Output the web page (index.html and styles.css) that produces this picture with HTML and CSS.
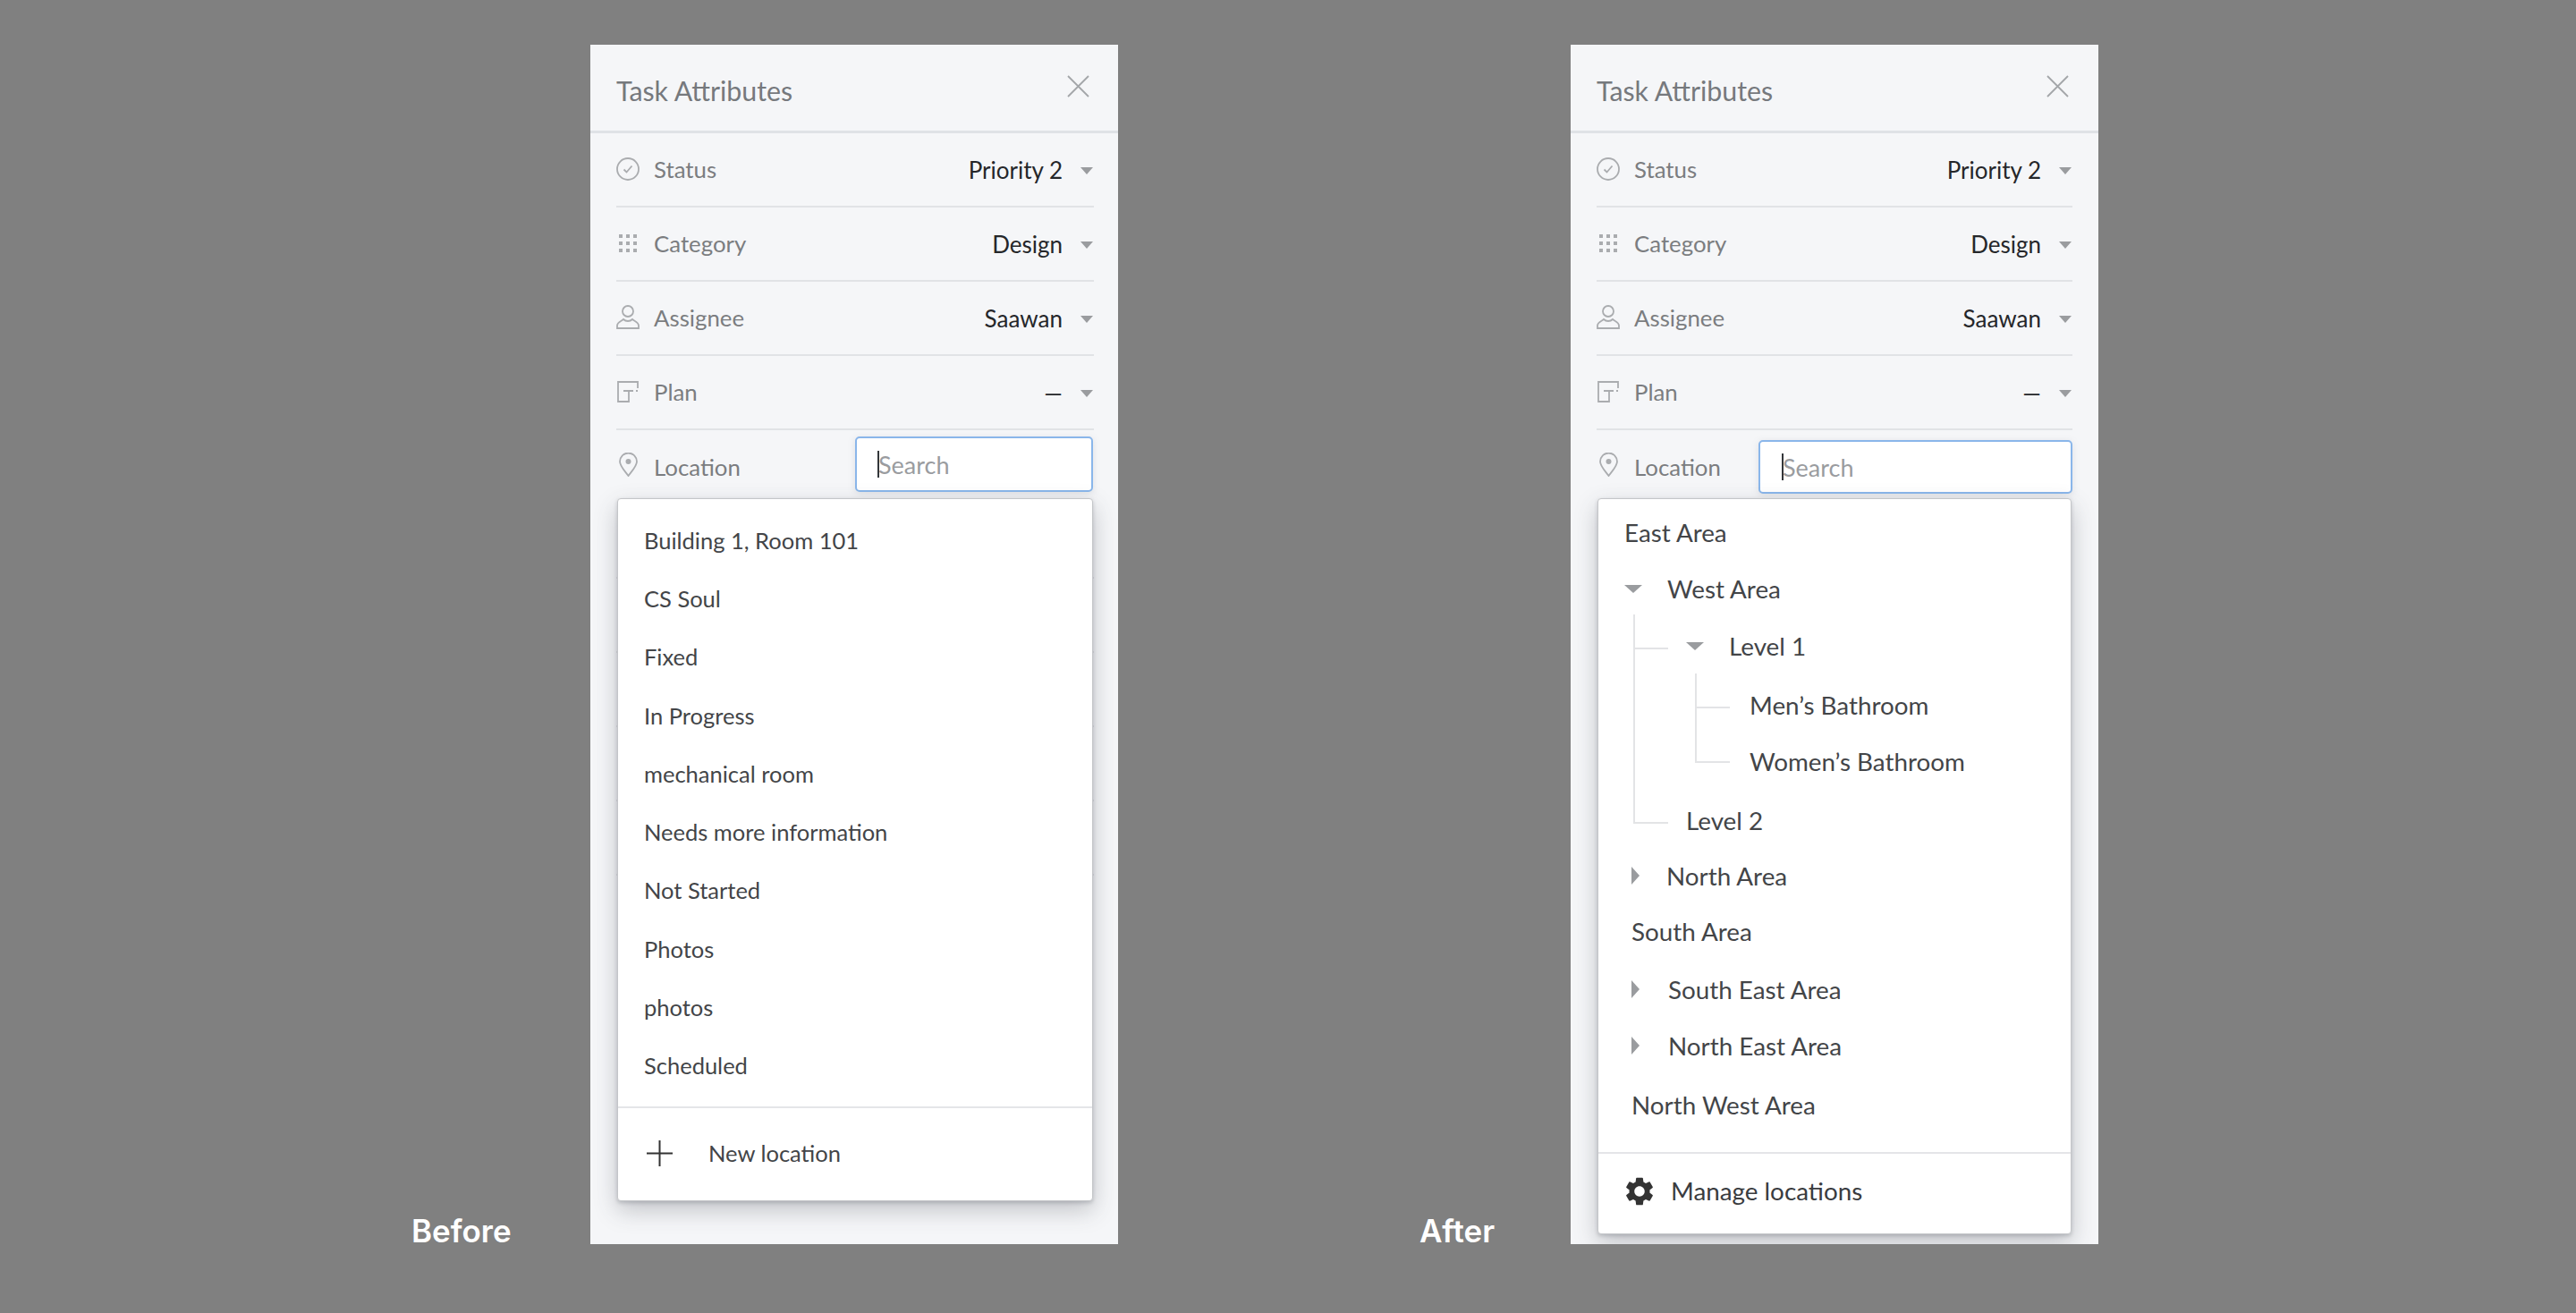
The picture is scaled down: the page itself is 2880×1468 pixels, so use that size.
FILE: index.html
```html
<!DOCTYPE html>
<html lang="en">
<head>
<meta charset="utf-8">
<title>Task Attributes: before and after</title>
<link rel="stylesheet" href="styles.css">
</head>
<body>
<svg class="defs" aria-hidden="true">
  <symbol id="i-close" viewBox="0 0 25 25"><path d="M1 1l23 23M24 1L1 24"/></symbol>
  <symbol id="i-status" viewBox="0 0 26 26"><circle cx="13" cy="13" r="12"/><path d="M8.5 13.5l3 3 6-7"/></symbol>
  <symbol id="i-category" viewBox="0 0 20 20"><path class="fill" d="M0 0h4v4H0zM8 0h4v4H8zM16 0h4v4h-4zM0 8h4v4H0zM8 8h4v4H8zM16 8h4v4h-4zM0 16h4v4H0zM8 16h4v4H8zM16 16h4v4h-4z"/></symbol>
  <symbol id="i-person" viewBox="0 0 26 27"><circle cx="13" cy="7" r="6"/><path d="M1 26v-3c0-4 5-5 7-7 1 1 3 2 5 2s4-1 5-2c2 2 7 3 7 7v3z"/></symbol>
  <symbol id="i-plan" viewBox="0 0 24 24"><path d="M23 8V1H1v22h12V11M7 11h11M21 11h2"/></symbol>
  <symbol id="i-pin" viewBox="0 0 21 27"><path d="M10.5 26C6 20 1 15 1 10a9.500 9.500 0 0 1 19 0c0 5-5 10-9.500 16z"/><circle class="fill" cx="10.500" cy="10" r="3"/></symbol>
  <symbol id="i-plus" viewBox="0 0 29 29"><path d="M14.500 0v29M0 14.500h29"/></symbol>
  <symbol id="i-gear" viewBox="2.600 2 18.800 20"><path class="fill" d="M19.140 12.940c.04-.3.06-.61.06-.94 0-.32-.02-.64-.07-.94l2.030-1.580c.18-.14.23-.41.12-.61l-1.920-3.320c-.12-.22-.37-.29-.59-.22l-2.390.96c-.5-.38-1.030-.7-1.620-.94l-.36-2.540c-.04-.24-.24-.41-.48-.41h-3.840c-.24 0-.43.17-.47.41l-.36 2.540c-.59.24-1.130.57-1.620.94l-2.390-.96c-.22-.08-.47 0-.59.22L2.740 8.870c-.12.21-.08.47.12.61l2.030 1.580c-.05.3-.09.63-.09.94s.02.64.07.94l-2.030 1.580c-.18.14-.23.41-.12.61l1.920 3.320c.12.22.37.29.59.22l2.390-.96c.5.38 1.030.7 1.620.94l.36 2.540c.05.24.24.41.48.41h3.840c.24 0 .44-.17.47-.41l.36-2.540c.59-.24 1.130-.56 1.620-.94l2.390.96c.22.08.47 0 .59-.22l1.920-3.320c.12-.22.07-.47-.12-.61l-2.010-1.580zM12 15.600c-1.980 0-3.600-1.620-3.600-3.600s1.620-3.600 3.600-3.600 3.600 1.620 3.600 3.600-1.620 3.600-3.600 3.600z"/></symbol>
</svg>

<main class="stage">
  <h2 class="tag tag-before">Before</h2>
  <section class="panel panel-before">
    <header class="panel-head">
      <h1 class="panel-title">Task Attributes</h1>
      <svg class="icon icon-close"><use href="#i-close"/></svg>
    </header>
    <div class="rows">
      <div class="row"><span class="ico-box"><svg class="icon icon-status"><use href="#i-status"/></svg></span><span class="label">Status</span><span class="value">Priority 2</span><i class="caret"></i></div>
      <div class="row"><span class="ico-box"><svg class="icon icon-category"><use href="#i-category"/></svg></span><span class="label">Category</span><span class="value">Design</span><i class="caret"></i></div>
      <div class="row"><span class="ico-box"><svg class="icon icon-person"><use href="#i-person"/></svg></span><span class="label">Assignee</span><span class="value">Saawan</span><i class="caret"></i></div>
      <div class="row"><span class="ico-box"><svg class="icon icon-plan"><use href="#i-plan"/></svg></span><span class="label">Plan</span><span class="value">—</span><i class="caret"></i></div>
      <div class="row row-location"><span class="ico-box"><svg class="icon icon-pin"><use href="#i-pin"/></svg></span><span class="label">Location</span><div class="search search-before"><span class="search-text">Search</span></div></div>
      <div class="row row-hidden"></div>
      <div class="row row-hidden"></div>
      <div class="row row-hidden"></div>
      <div class="row row-hidden"></div>
      <div class="row row-hidden"></div>
    </div>
    <div class="menu menu-before">
      <ul class="flat-list">
        <li>Building 1, Room 101</li>
        <li>CS Soul</li>
        <li>Fixed</li>
        <li>In Progress</li>
        <li>mechanical room</li>
        <li>Needs more information</li>
        <li>Not Started</li>
        <li>Photos</li>
        <li>photos</li>
        <li>Scheduled</li>
      </ul>
      <div class="menu-foot foot-new"><svg class="icon icon-plus"><use href="#i-plus"/></svg><span>New location</span></div>
    </div>
  </section>

  <h2 class="tag tag-after">After</h2>
  <section class="panel panel-after">
    <header class="panel-head">
      <h1 class="panel-title">Task Attributes</h1>
      <svg class="icon icon-close"><use href="#i-close"/></svg>
    </header>
    <div class="rows">
      <div class="row"><span class="ico-box"><svg class="icon icon-status"><use href="#i-status"/></svg></span><span class="label">Status</span><span class="value">Priority 2</span><i class="caret"></i></div>
      <div class="row"><span class="ico-box"><svg class="icon icon-category"><use href="#i-category"/></svg></span><span class="label">Category</span><span class="value">Design</span><i class="caret"></i></div>
      <div class="row"><span class="ico-box"><svg class="icon icon-person"><use href="#i-person"/></svg></span><span class="label">Assignee</span><span class="value">Saawan</span><i class="caret"></i></div>
      <div class="row"><span class="ico-box"><svg class="icon icon-plan"><use href="#i-plan"/></svg></span><span class="label">Plan</span><span class="value">—</span><i class="caret"></i></div>
      <div class="row row-location"><span class="ico-box"><svg class="icon icon-pin"><use href="#i-pin"/></svg></span><span class="label">Location</span><div class="search search-after"><span class="search-text">Search</span></div></div>
    </div>
    <div class="menu menu-after">
      <div class="tree">
        <svg class="tree-lines" aria-hidden="true"><path d="M40 129V362H78M40 167H78M109 195V294H147M109 233H147"/></svg>
        <div class="node n-root">East Area</div>
        <div class="node n-open up1"><i class="caret caret-tree"></i>West Area</div>
        <div class="node n-open-2"><i class="caret caret-tree"></i>Level 1</div>
        <div class="node n-leaf-3 down2">Men’s Bathroom</div>
        <div class="node n-leaf-3 up1">Women’s Bathroom</div>
        <div class="node n-leaf-2 down2">Level 2</div>
        <div class="node n-closed up2"><i class="caret-right"></i>North Area</div>
        <div class="node n-plain up2">South Area</div>
        <div class="node n-closed wide down1"><i class="caret-right"></i>South East Area</div>
        <div class="node n-closed wide up1"><i class="caret-right"></i>North East Area</div>
        <div class="node n-plain down2">North West Area</div>
      </div>
      <div class="menu-foot foot-manage"><svg class="icon icon-gear"><use href="#i-gear"/></svg><span>Manage locations</span></div>
    </div>
  </section>
</main>
</body>
</html>
```

FILE: styles.css
```css
* { box-sizing: border-box; }
html, body { margin: 0; padding: 0; }
body {
  width: 2880px;
  height: 1468px;
  background: #808080;
  font-family: Lato, "Open Sans", sans-serif;
  overflow: hidden;
}
.defs { display: none; }

.stage {
  display: grid;
  grid-template-columns: 201px 590px 337px 169px 590px;
  padding: 50px 0 0 459px;
}
.tag-before { grid-column: 1; grid-row: 1; padding-left: 1px; }
.panel-before { grid-column: 2; grid-row: 1; }
.tag-after { grid-column: 4; grid-row: 1; }
.panel-after { grid-column: 5; grid-row: 1; }

.tag {
  align-self: end;
  margin: 0 0 -7px;
  color: #fff;
  font-family: Inter, "Open Sans", sans-serif;
  font-size: 35px;
  font-weight: 600;
  line-height: 44px;
}

.panel {
  position: relative;
  height: 1341px;
  padding: 0 27px 0 29px;
  background: #f5f6f8;
  overflow: hidden;
}
.panel-after { padding-right: 29px; }

.panel-head {
  display: flex;
  justify-content: space-between;
  height: 99px;
  margin: 0 -27px 0 -29px;
  padding: 33px 32px 0 29px;
  border-bottom: 3px solid #dfe2e6;
}
.panel-after .panel-head { margin-right: -29px; padding-right: 33px; }
.panel-title {
  margin: 0;
  color: #76797d;
  font-size: 30.300px;
  font-weight: 400;
  line-height: 36px;
}

.icon { display: block; fill: none; stroke: #aaacaf; color: #aaacaf; stroke-width: 1.800; overflow: visible; }
symbol .fill { fill: currentColor; stroke: none; }
.icon-close { width: 25px; height: 25px; stroke: #a3a6a9; margin-top: 1px; }
.icon-status { width: 26px; height: 26px; }
.icon-category { width: 20px; height: 20px; }
.icon-person { width: 26px; height: 27px; }
.icon-plan { width: 24px; height: 24px; }
.icon-pin { width: 21px; height: 27px; }
.icon-plus { width: 29px; height: 29px; stroke: #333; color: #333; stroke-width: 2; }
.icon-gear { width: 30px; height: 32px; stroke: none; color: #333; }

.row {
  display: flex;
  align-items: center;
  height: 83px;
  border-bottom: 2px solid #e1e3e6;
}
.ico-box {
  display: flex;
  justify-content: center;
  width: 26px;
  margin-right: 16px;
  margin-top: -2px;
}
.label {
  margin-top: -2px;
  color: #7b7d80;
  font-size: 25.800px;
}
.value {
  margin-left: auto;
  color: #25272a;
  font-size: 26px;
}
.caret {
  display: block;
  width: 0;
  height: 0;
  margin: 3px 1px 0 20px;
  border-left: 7px solid transparent;
  border-right: 7px solid transparent;
  border-top: 8px solid #9a9c9f;
}

.row-location { align-items: flex-start; border-bottom: 0; padding-top: 27px; }
.row-location .label { margin-top: -1px; }

.search {
  display: flex;
  align-items: center;
  margin-left: auto;
  background: #fff;
  border: 2px solid #8ab6ea;
  border-radius: 5px;
  box-shadow: 0 2px 8px rgba(120, 130, 140, .18);
  color: #9a9c9f;
  font-size: 27px;
}
.search-before { width: 266px; height: 62px; margin-top: -20px; margin-right: 1px; padding-left: 24px; }
.search-after { width: 351px; height: 60px; margin-top: -16px; padding-left: 25px; }
.search-text {
  position: relative;
}
.search-text::before {
  content: "";
  position: absolute;
  left: -1px;
  top: 1px;
  width: 2px;
  height: 30px;
  background: #33363a;
}

.menu {
  position: absolute;
  top: 507px;
  left: 30px;
  display: flex;
  flex-direction: column;
  background: #fff;
  border: 1px solid #c4c6c9;
  border-radius: 4px;
  box-shadow: 0 10px 26px rgba(60, 65, 75, .28), 0 2px 4px rgba(60, 65, 75, .22);
  color: #434548;
}
.menu-before { width: 532px; height: 786px; }
.menu-after { width: 530px; height: 823px; font-size: 27.800px; }

.flat-list {
  margin: 0;
  padding: 13px 0 13px 29px;
  list-style: none;
  font-size: 25.500px;
  border-bottom: 2px solid #e4e5e8;
}
.flat-list li {
  display: flex;
  align-items: center;
  height: 65.300px;
}

.menu-foot { display: flex; align-items: center; flex: 1; }
.foot-new { padding: 0 0 2px 32px; font-size: 25.500px; }
.foot-new span { margin-left: 40px; }
.foot-manage { padding: 0 0 6px 31px; font-size: 27.800px; color: #3a3c3f; }
.foot-manage span { margin-left: 20px; }

.tree {
  position: relative;
  padding: 5px 0 21px;
  border-bottom: 2px solid #e4e5e8;
}
.tree-lines {
  position: absolute;
  left: 0;
  top: 0;
  width: 100%;
  height: 100%;
  fill: none;
  stroke: #e3e4e6;
  stroke-width: 2;
}
.node {
  position: relative;
  display: flex;
  align-items: center;
  height: 64px;
}
.up1 { margin-top: -1px; }
.up2 { margin-top: -2px; }
.down1 { margin-top: 1px; }
.down2 { margin-top: 2px; }
.n-root { padding-left: 29px; }
.n-open { padding-left: 29px; }
.n-open-2 { padding-left: 98px; }
.n-leaf-3 { padding-left: 169px; }
.n-leaf-2 { padding-left: 98px; }
.n-closed { padding-left: 37px; }
.n-plain { padding-left: 37px; }
.caret.caret-tree {
  margin: 0 28px 0 0;
  border-left-width: 10px;
  border-right-width: 10px;
  border-top-width: 9px;
}
.caret-right {
  display: block;
  width: 0;
  height: 0;
  margin-right: 30px;
  border-top: 10px solid transparent;
  border-bottom: 10px solid transparent;
  border-left: 9px solid #9a9c9f;
}
.wide .caret-right { margin-right: 32px; }
```
